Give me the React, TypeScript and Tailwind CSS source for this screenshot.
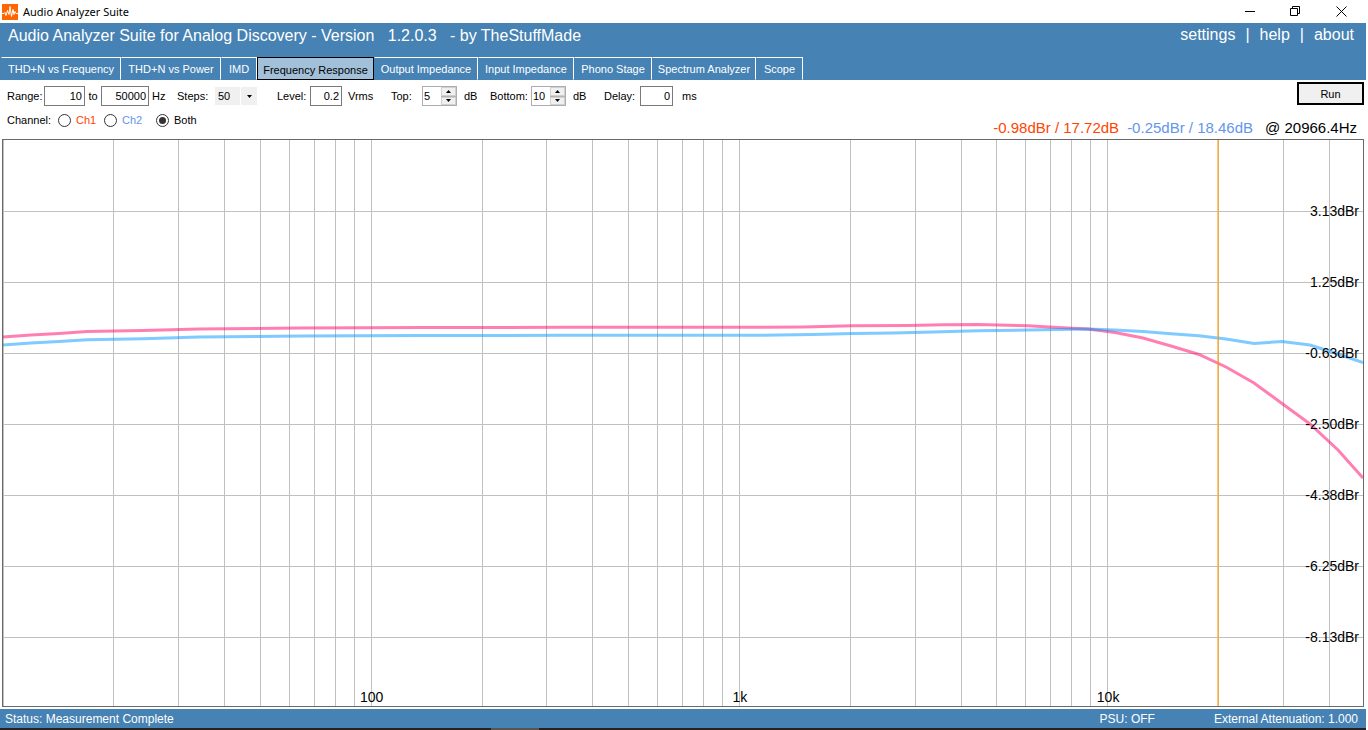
import { useState } from "react";
import type { ReactNode } from "react";

const TABS = [
  { name: "THD+N vs Frequency", width: "w-[120px]" },
  { name: "THD+N vs Power", width: "w-[100px]" },
  { name: "IMD", width: "w-[36px]" },
  { name: "Frequency Response", width: "w-[117px]" },
  { name: "Output Impedance", width: "w-[104px]" },
  { name: "Input Impedance", width: "w-[96px]" },
  { name: "Phono Stage", width: "w-[78px]" },
  { name: "Spectrum Analyzer", width: "w-[104px]" },
  { name: "Scope", width: "w-[47px]" },
];

// plot coordinates: one decade per DECADE units starting at 10 Hz, 71 units per level line
const PLOT_W = 1360;
const PLOT_H = 566;
const DECADE = 368.2;
const LEVEL_STEP = 71;

const LEVELS = ["3.13dBr", "1.25dBr", "-0.63dBr", "-2.50dBr", "-4.38dBr", "-6.25dBr", "-8.13dBr"];
const FREQUENCIES = [
  { label: "100", x: DECADE },
  { label: "1k", x: DECADE * 2 },
  { label: "10k", x: DECADE * 3 },
];

const GRID_X = [10, 100, 1000, 10000]
  .flatMap((base) => [1, 2, 3, 4, 5, 6, 7, 8, 9].map((n) => base * n))
  .filter((f) => f < 50000)
  .map((f) => Math.floor(DECADE * Math.log10(f / 10)) + 0.5);
const GRID_Y = LEVELS.map((_, i) => LEVEL_STEP * (i + 1) + 0.5);

const CH1 =
  "0,197 28,195 56,193.500 84,191.500 140,190.500 196,189 300,188 420,187.500 560,187.300 740,187.300 800,187 850,185.700 905,185.500 940,184.800 975,184.600 1025,185.800 1055,187.500 1085,189 1112,192.500 1140,198 1168,206 1196,214.500 1223,227 1251,243 1279,263.500 1307,284 1335,310 1360,338";
const CH2 =
  "0,205 28,203 56,201.500 84,199.800 140,198.800 196,197 300,196 420,195.600 560,195.300 760,195.300 810,194.600 850,193.500 890,193 930,192 975,190.800 1025,190 1055,189.600 1085,189 1112,190 1140,191.600 1168,193.800 1196,195.800 1223,199 1251,203.500 1279,201.500 1307,205 1335,214 1360,222.500";

function WaveLogo() {
  return (
    <svg className="h-4 w-4" viewBox="0 0 16 16" aria-hidden="true">
      <path fill="#ff6600" d="M0 0h16v16H0z" />
      <path
        fill="none"
        stroke="#fff"
        strokeWidth="1"
        d="M0 9.500h2l1-1 1 3 1.500-5 1.500 4 1-8 1.500 10 1.500-7 1 5 1-3 1 2H16"
      />
    </svg>
  );
}

function TitleBar() {
  return (
    <div className="flex h-[23px] items-center bg-white pr-[2px] pl-[2px]">
      <WaveLogo />
      <h1 className="ml-[5px] flex-1 font-['Noto_Sans',sans-serif] text-[11px] leading-4">
        Audio Analyzer Suite
      </h1>
      <button aria-label="Minimize" className="flex h-full w-[45px] items-center justify-center">
        <svg className="h-[11px] w-[11px]" viewBox="0 0 11 11" fill="none" stroke="#000">
          <path d="M0 5.500h10" />
        </svg>
      </button>
      <button aria-label="Restore" className="flex h-full w-[45px] items-center justify-center">
        <svg className="h-[11px] w-[11px]" viewBox="0 0 11 11" fill="none" stroke="#000">
          <path d="M.5 2.500h7v7h-7zM2.500 2.500v-2h7v7h-2" />
        </svg>
      </button>
      <button aria-label="Close" className="flex h-full w-[46px] items-center justify-center">
        <svg className="h-[11px] w-[11px]" viewBox="0 0 11 11" fill="none" stroke="#000">
          <path d="M.5 .5l10 10M10.500 .5l-10 10" />
        </svg>
      </button>
    </div>
  );
}

function Header({ tab, onTab }: { tab: string; onTab: (name: string) => void }) {
  return (
    <header className="flex h-[57px] flex-col justify-between bg-[#4682b4] text-white">
      <div className="flex items-start justify-between pr-3 pl-2">
        <p className="pt-px text-[16px] leading-6 whitespace-pre">
          {"Audio Analyzer Suite for Analog Discovery - Version   1.2.0.3   - by TheStuffMade"}
        </p>
        <nav className="flex gap-[10px] text-[16px] leading-6">
          <a href="#settings">settings</a>
          <span>|</span>
          <a href="#help">help</a>
          <span>|</span>
          <a href="#about">about</a>
        </nav>
      </div>
      <div role="tablist" className="flex h-[23px] pl-px text-[11px] leading-4">
        {TABS.map(({ name, width }) => (
          <button
            key={name}
            role="tab"
            aria-selected={tab === name}
            onClick={() => onTab(name)}
            className={`${width} shrink-0 border whitespace-nowrap ${
              tab === name
                ? "border-black bg-[#a2c0d9] pt-[2px] text-black"
                : "border-t-white border-r-white border-b-[#4682b4] border-l-[#4682b4]"
            }`}
          >
            {name}
          </button>
        ))}
      </div>
    </header>
  );
}

function TextField({
  id,
  value,
  label,
  className,
}: {
  id: string;
  value: string;
  label: string;
  className: string;
}) {
  return (
    <input
      id={id}
      aria-label={label}
      defaultValue={value}
      className={`h-5 border border-[#7a7a7a] bg-white pr-[2px] text-right ${className}`}
    />
  );
}

function Spinner({ id, initial }: { id: string; initial: number }) {
  const [value, setValue] = useState(initial);

  return (
    <div className="flex h-5 w-[35px] border border-[#abadb3]">
      <input
        id={id}
        value={value}
        onChange={(e) => setValue(Number(e.target.value) || 0)}
        className="w-[18px] min-w-0 pl-px"
      />
      <div className="flex w-[15px] flex-col bg-[#b4b4b4]">
        <button
          aria-label="Increase"
          onClick={() => setValue(value + 1)}
          className="mb-px flex flex-1 items-center justify-center border border-[#d0d0d0] bg-[#f0f0f0]"
        >
          <svg className="h-[3px] w-[5px]" viewBox="0 0 5 3">
            <path d="M0 3L2.500 0 5 3z" />
          </svg>
        </button>
        <button
          aria-label="Decrease"
          onClick={() => setValue(value - 1)}
          className="flex flex-1 items-center justify-center border border-[#d0d0d0] bg-[#f0f0f0]"
        >
          <svg className="h-[3px] w-[5px]" viewBox="0 0 5 3">
            <path d="M0 0L2.500 3 5 0z" />
          </svg>
        </button>
      </div>
    </div>
  );
}

function Channel({
  value,
  selected,
  onSelect,
  className,
  children,
}: {
  value: string;
  selected: string;
  onSelect: (value: string) => void;
  className: string;
  children: ReactNode;
}) {
  return (
    <label className={`flex items-center gap-[5px] ${className}`}>
      <input
        type="radio"
        name="channel"
        checked={selected === value}
        onChange={() => onSelect(value)}
        className="h-[13px] w-[13px] appearance-none rounded-full border border-[#333] bg-white checked:bg-[#333] checked:bg-clip-content checked:p-[2px]"
      />
      {children}
    </label>
  );
}

function Toolbar() {
  const [channel, setChannel] = useState("both");

  return (
    <section className="flex h-[59px] justify-between pr-[2px] text-[11px] leading-4">
      <div className="pt-[6px] pl-[7px]">
        <div className="flex h-5 items-center">
          <label htmlFor="range-from" className="w-[37px]">
            Range:
          </label>
          <TextField id="range-from" label="Range from" value="10" className="w-[41px]" />
          <span className="w-4 text-center">to</span>
          <TextField id="range-to" label="Range to" value="50000" className="w-[48px]" />
          <span className="ml-[3px] w-[25px]">Hz</span>
          <label htmlFor="steps" className="w-[38px]">
            Steps:
          </label>
          <div className="relative h-[18px] w-[42px]">
            <select
              id="steps"
              defaultValue="50"
              className="h-full w-full appearance-none bg-[#f0f0f0] pl-[3px]"
            >
              <option>25</option>
              <option>50</option>
              <option>100</option>
            </select>
            <div className="pointer-events-none absolute inset-y-0 right-0 flex w-[17px] items-center justify-center border-l border-white">
              <svg className="h-[3px] w-[5px]" viewBox="0 0 5 3">
                <path d="M0 0L2.500 3 5 0z" />
              </svg>
            </div>
          </div>
          <label htmlFor="level" className="ml-5 w-[33px]">
            Level:
          </label>
          <TextField id="level" label="Level" value="0.2" className="w-[32px]" />
          <span className="ml-[6px] w-[43px]">Vrms</span>
          <label htmlFor="top" className="w-[31px]">
            Top:
          </label>
          <Spinner id="top" initial={5} />
          <span className="ml-[7px] w-[26px]">dB</span>
          <label htmlFor="bottom" className="w-[41px]">
            Bottom:
          </label>
          <Spinner id="bottom" initial={10} />
          <span className="ml-[7px] w-[31px]">dB</span>
          <label htmlFor="delay" className="w-[36px]">
            Delay:
          </label>
          <TextField id="delay" label="Delay" value="0" className="w-[33px]" />
          <span className="ml-[9px]">ms</span>
        </div>
        <div className="mt-[5px] flex h-[18px] items-center">
          <span className="w-[51px]">Channel:</span>
          <Channel
            value="ch1"
            selected={channel}
            onSelect={setChannel}
            className="w-[46px] text-[#ff4500]"
          >
            Ch1
          </Channel>
          <Channel
            value="ch2"
            selected={channel}
            onSelect={setChannel}
            className="w-[52px] text-[#6495ed]"
          >
            Ch2
          </Channel>
          <Channel value="both" selected={channel} onSelect={setChannel} className="">
            Both
          </Channel>
        </div>
      </div>
      <div className="flex flex-col items-end pt-[2px]">
        <button className="h-[23px] w-[67px] border-2 border-black bg-[#f0f0f0]">Run</button>
        <div className="mt-[13px] flex pr-[7px] text-[15px] leading-5">
          <output className="mr-2 text-[#ff4500]">-0.98dBr / 17.72dB</output>
          <output className="mr-3 text-[#6495ed]">-0.25dBr / 18.46dB</output>
          <output>@ 20966.4Hz</output>
        </div>
      </div>
    </section>
  );
}

function ResponseChart() {
  return (
    <figure
      aria-label="Frequency response"
      className="relative mr-[2px] ml-[2px] min-h-[300px] flex-1 overflow-hidden border border-[#696969]"
    >
      <svg
        className="absolute inset-0 h-full w-full"
        viewBox={`0 0 ${PLOT_W} ${PLOT_H}`}
        preserveAspectRatio="none"
        fill="none"
      >
        <g stroke="#c0c0c0">
          {GRID_X.map((x) => (
            <path key={x} d={`M${x} 0V${PLOT_H}`} />
          ))}
          {GRID_Y.map((y) => (
            <path key={y} d={`M0 ${y}H${PLOT_W}`} />
          ))}
        </g>
        <polyline points={CH1} stroke="#ff0066" strokeOpacity="0.5" strokeWidth="3" />
        <polyline points={CH2} stroke="#0096ff" strokeOpacity="0.5" strokeWidth="3" />
        <path d={`M1215 0V${PLOT_H}`} stroke="#ffa019" strokeOpacity="0.6" strokeWidth="2" />
      </svg>
      {LEVELS.map((label, i) => (
        <span
          key={label}
          className="absolute right-1 -translate-y-1/2 text-[14px] leading-4"
          style={{ top: `${((LEVEL_STEP * (i + 1)) / PLOT_H) * 100}%` }}
        >
          {label}
        </span>
      ))}
      {FREQUENCIES.map(({ label, x }) => (
        <span
          key={label}
          className="absolute bottom-px -translate-x-1/2 pl-px text-[14px] leading-4"
          style={{ left: `${(x / PLOT_W) * 100}%` }}
        >
          {label}
        </span>
      ))}
    </figure>
  );
}

export default function App() {
  const [tab, setTab] = useState("Frequency Response");

  return (
    <div className="bg-white pr-[2px]">
      <main className="flex h-screen flex-col bg-white font-['Liberation_Sans',Arial,sans-serif] text-black">
        <TitleBar />
        <Header tab={tab} onTab={setTab} />
        <Toolbar />
        <ResponseChart />
        <footer className="mt-[2px] flex h-[19px] items-center bg-[#4682b4] pt-px pr-2 pl-[5px] text-[12px] leading-4 text-white">
          <span className="flex-1">Status: Measurement Complete</span>
          <span className="mr-[59px]">PSU: OFF</span>
          <span>External Attenuation: 1.000</span>
        </footer>
        <div className="flex h-[2px] bg-[#262222] pl-[491px]">
          <span className="w-12 bg-[#555]" />
        </div>
      </main>
    </div>
  );
}
